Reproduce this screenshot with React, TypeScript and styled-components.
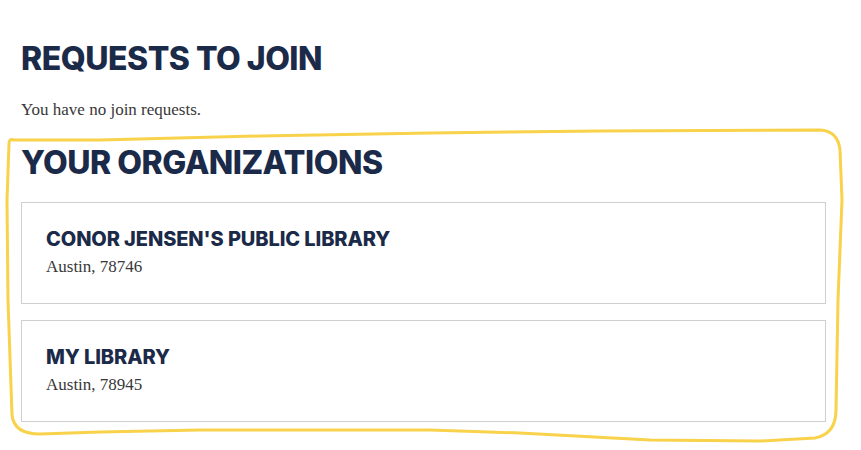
import React from "react";
import styled, { createGlobalStyle } from "styled-components";

const Global = createGlobalStyle`
  html, body { margin: 0; padding: 0; background: #fff; }
  body { width: 861px; height: 450px; overflow: hidden; }
`;

const Page = styled.div`
  position: relative;
  padding: 43px 35px 0 21px;
  display: flex;
  flex-direction: column;
`;

const Heading = styled.h2<{ $gap?: number }>`
  margin: ${(p) => p.$gap ?? 0}px 0 0;
  font-family: Inter, "Open Sans", sans-serif;
  font-weight: 800;
  font-size: 32px;
  line-height: 32px;
  letter-spacing: -0.5px;
  color: #1b2a48;
  text-transform: uppercase;
`;

const Note = styled.p`
  margin: 25px 0 0;
  font-family: "Liberation Serif", "DejaVu Serif", serif;
  font-size: 17px;
  line-height: 20px;
  color: #383838;
`;

const List = styled.div`
  margin-top: 23px;
  display: flex;
  flex-direction: column;
  gap: 16px;
`;

const Card = styled.div`
  border: 1px solid #cfcfcf;
  height: 102px;
  box-sizing: border-box;
  padding: 25px 24px 0;
  display: flex;
  flex-direction: column;
`;

const CardTitle = styled.h3`
  margin: 0;
  font-family: Inter, "Open Sans", sans-serif;
  font-weight: 800;
  font-size: 20px;
  line-height: 22px;
  letter-spacing: -0.1px;
  color: #1b2a48;
`;

const CardSub = styled.div`
  margin-top: 7px;
  font-family: "Liberation Serif", "DejaVu Serif", serif;
  font-size: 17px;
  line-height: 20px;
  color: #383838;
`;

const Scribble = styled.svg`
  position: absolute;
  left: 0;
  top: 0;
  pointer-events: none;
`;

const orgs = [
  { name: "CONOR JENSEN'S PUBLIC LIBRARY", place: "Austin, 78746" },
  { name: "MY LIBRARY", place: "Austin, 78945" },
];

export default function App() {
  return (
    <>
      <Global />
      <Page>
        <Heading>Requests to Join</Heading>
        <Note>You have no join requests.</Note>
        <Heading $gap={27}>Your Organizations</Heading>
        <List>
          {orgs.map((o) => (
            <Card key={o.name}>
              <CardTitle>{o.name}</CardTitle>
              <CardSub>{o.place}</CardSub>
            </Card>
          ))}
        </List>
        <Scribble width="861" height="450" viewBox="0 0 861 450">
          <path
            d="M 14 140 Q 9 138 9 144 L 7 200 L 8 300 L 12 415 Q 14 434 40 434 L 100 432 L 200 430 L 430 430 L 520 433 L 650 440 L 760 441 L 815 438 Q 836 434 836 410 L 838 300 L 842 200 L 840 150 Q 838 131 820 130 L 600 131 L 430 133 L 260 136 L 100 140 Z"
            fill="none"
            stroke="#f8d24a"
            strokeWidth="3"
            strokeLinejoin="round"
          />
        </Scribble>
      </Page>
    </>
  );
}
